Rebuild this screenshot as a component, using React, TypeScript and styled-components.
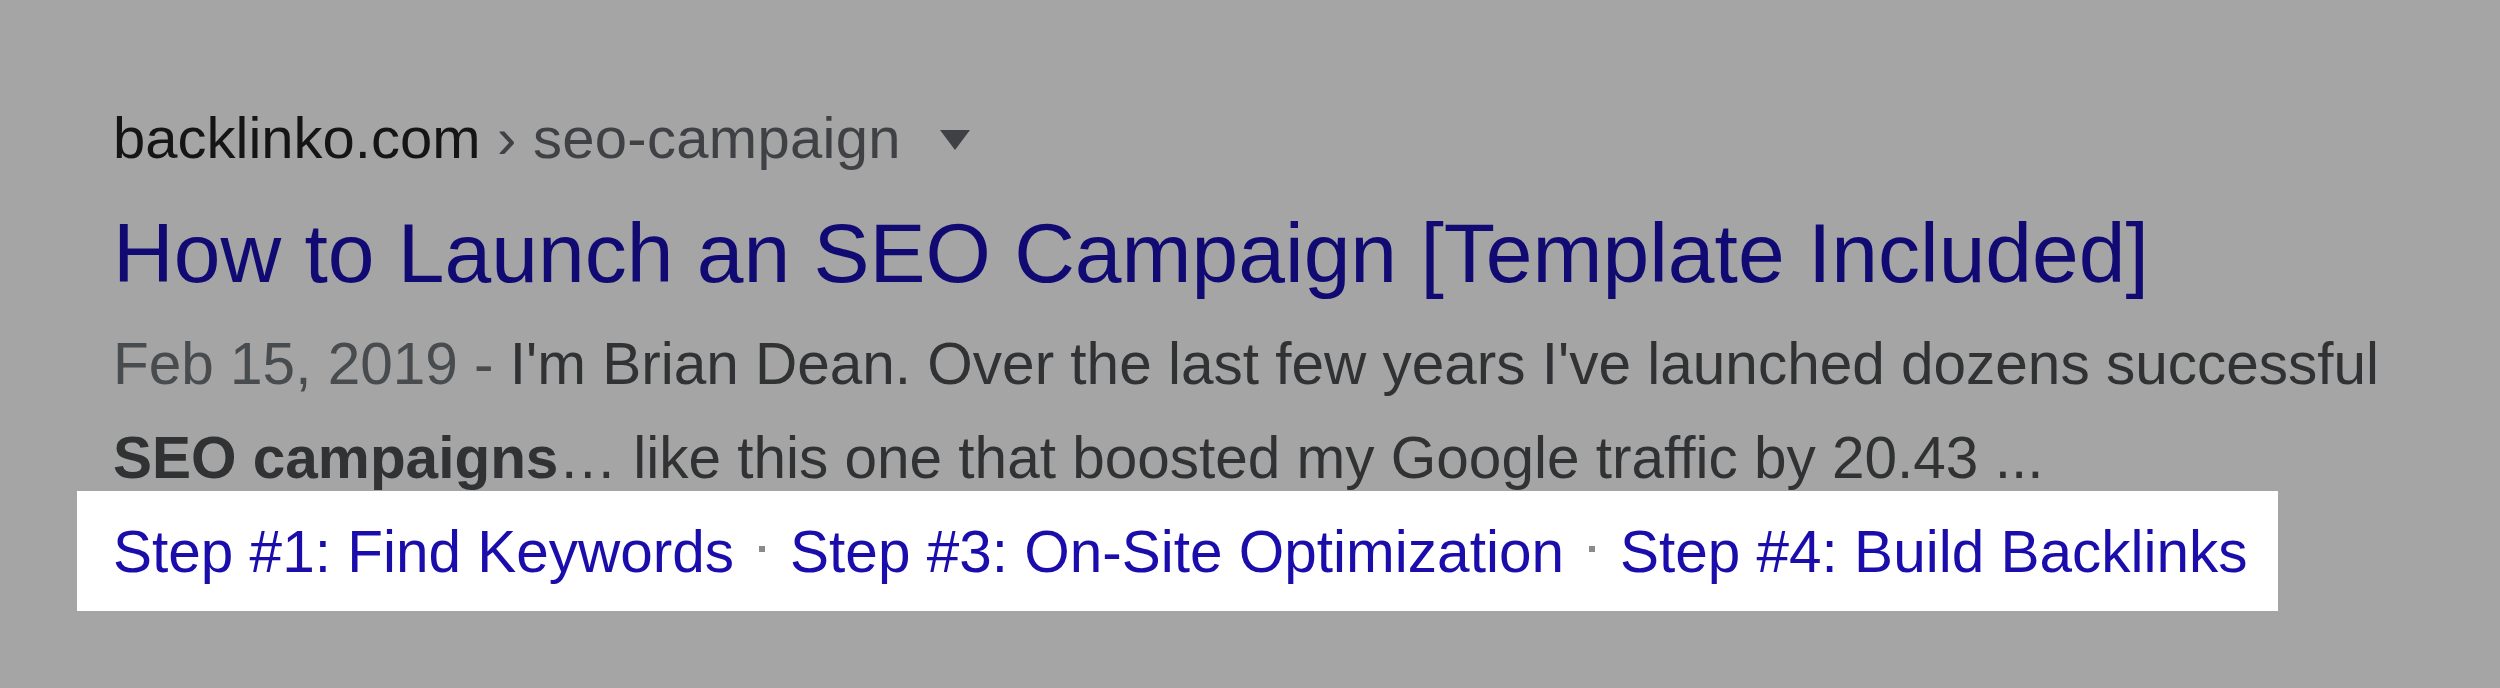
import styled, { createGlobalStyle } from "styled-components";

const GlobalStyle = createGlobalStyle`
  html, body {
    margin: 0;
    padding: 0;
    background: #a5a5a5;
  }
`;

const Page = styled.div`
  min-height: 688px;
  background: #a5a5a5;
  padding: 104px 0 0 113px;
  box-sizing: border-box;
  font-family: Arial, "Liberation Sans", sans-serif;
`;

const Breadcrumb = styled.div`
  display: flex;
  align-items: center;
  font-size: 58px;
  line-height: 68px;
  white-space: nowrap;
`;

const Domain = styled.span`
  color: #151516;
`;

const Path = styled.span`
  color: #3f4144;
  letter-spacing: 0.3px;
`;

const Caret = styled.span`
  display: inline-block;
  width: 0;
  height: 0;
  margin-left: 39px;
  margin-top: 4px;
  border-left: 15px solid transparent;
  border-right: 15px solid transparent;
  border-top: 20px solid #3f4144;
`;

const Title = styled.a`
  display: block;
  margin-top: 31px;
  font-size: 84px;
  line-height: 100px;
  color: #110a72;
  text-decoration: none;
  white-space: nowrap;
`;

const Snippet = styled.div`
  margin-top: 14px;
  max-width: 2330px;
  font-size: 58.5px;
  line-height: 94px;
  color: #303234;

  b {
    font-weight: bold;
  }
`;

const Date = styled.span`
  color: #484c4f;
`;

const Sitelinks = styled.div`
  display: inline-flex;
  align-items: center;
  margin: -14px 0 0 -36px;
  padding: 0 30px 0 36px;
  height: 120px;
  background: #ffffff;
  font-size: 58.5px;
  white-space: nowrap;
`;

const Sitelink = styled.a`
  color: #1a0dab;
  text-decoration: none;
`;

const Dot = styled.span`
  display: inline-block;
  width: 6px;
  height: 6px;
  margin: 0 25px 0 25px;
  vertical-align: 20px;
  background: #8a8a8a;
`;

const links = [
  "Step #1: Find Keywords",
  "Step #3: On-Site Optimization",
  "Step #4: Build Backlinks",
];

export default function App() {
  return (
    <>
      <GlobalStyle />
      <Page>
        <Breadcrumb>
          <Domain>backlinko.com</Domain>
          <Path>&nbsp;› seo-campaign</Path>
          <Caret />
        </Breadcrumb>
        <Title href="#">How to Launch an SEO Campaign [Template Included]</Title>
        <Snippet>
          <Date>Feb 15, 2019 - </Date>I&apos;m Brian Dean. Over the last few
          years I&apos;ve launched dozens successful <b>SEO campaigns</b>… like
          this one that boosted my Google traffic by 20.43 ...
        </Snippet>
        <Sitelinks>
          {links.map((l, i) => (
            <span key={l}>
              {i > 0 && <Dot />}
              <Sitelink href="#">{l}</Sitelink>
            </span>
          ))}
        </Sitelinks>
      </Page>
    </>
  );
}
